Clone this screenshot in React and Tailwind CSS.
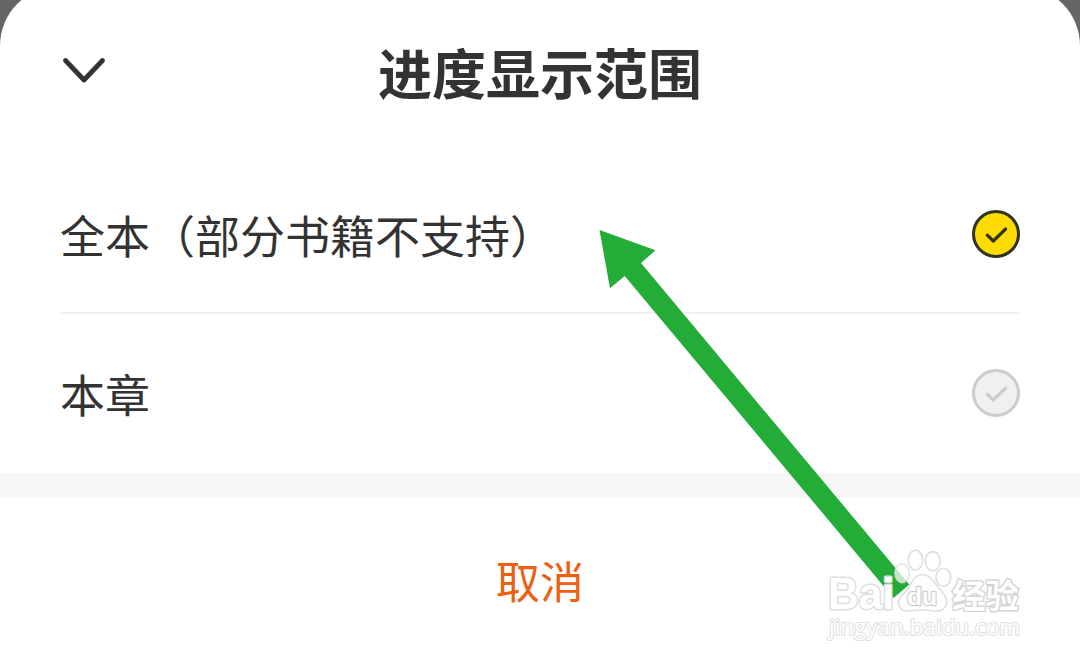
import { useState } from "react";
import clsx from "clsx";

const OPTIONS = [
  { id: "book", label: "全本（部分书籍不支持）" },
  { id: "chapter", label: "本章" },
];

const ChevronIcon = () => (
  <svg
    width="48"
    height="48"
    viewBox="0 0 48 48"
    fill="none"
    stroke="#333333"
    strokeWidth="4.8"
    strokeLinecap="round"
    strokeLinejoin="round"
  >
    <path d="M5.500 14.500 24 34l18.500-19.500" />
  </svg>
);

const CheckCircle = ({ checked }) => (
  <span
    className={clsx(
      "flex size-12 shrink-0 items-center justify-center rounded-full border-[3px]",
      checked
        ? "border-[#333322] bg-[#ffdc00] text-[#333322]"
        : "border-[#cccccc] bg-[#f0f0f0] text-[#cccccc]"
    )}
  >
    <svg
      width="42"
      height="42"
      viewBox="0 0 42 42"
      className="shrink-0"
      fill="none"
      stroke="currentColor"
      strokeWidth="3.2"
      strokeLinecap="round"
      strokeLinejoin="round"
    >
      <path d="M12.3 22.1 18.3 28 30.6 16" />
    </svg>
  </span>
);

const OptionRow = ({ label, checked, onSelect, className }) => (
  <button
    type="button"
    role="radio"
    aria-checked={checked}
    onClick={onSelect}
    className={clsx("flex w-full items-center justify-between", className)}
  >
    <span className="pt-[8px] text-[45px] leading-none">{label}</span>
    <CheckCircle checked={checked} />
  </button>
);

const Arrow = () => (
  <svg
    className="pointer-events-none absolute inset-0"
    width="1080"
    height="665"
    viewBox="0 0 1080 665"
  >
    <path
      d="M599.5 230 655.5 250.3 641 263 909.3 584.5 893.5 598 624.7 276 610 288.3Z"
      fill="#24ac38"
    />
  </svg>
);

const Watermark = () => (
  <svg
    className="pointer-events-none absolute top-[540px] left-[820px]"
    width="220"
    height="110"
    viewBox="0 0 220 110"
    fill="#ffffff"
    stroke="#dedede"
    strokeWidth="1.6"
    strokeLinejoin="round"
  >
    <g fillOpacity="0.72">
      <ellipse cx="82.2" cy="33.2" rx="7.3" ry="9.4" strokeOpacity="0.8" />
      <ellipse cx="95.5" cy="20" rx="7.2" ry="9.8" />
      <ellipse cx="112.7" cy="21.2" rx="7.5" ry="9.6" />
      <ellipse cx="123.3" cy="37.3" rx="7.4" ry="9" />
    </g>
    <path
      d="M102 34.5c6 0 9.500 3.500 12.500 8s6 7.500 9 11c3 4 4 8 2.500 12-2 4.500-6 6-11 5.500-5-.7-8-1-13-1s-9 1-14 1c-5.500 0-9-2.500-9.500-7.500s3-8 6-10.500c3.500-3 4.500-6.500 7-10.500s5.500-8 10.500-8Z"
      fillOpacity="0"
    />
    <text
      x="8"
      y="69"
      fontFamily="'Liberation Sans', sans-serif"
      fontWeight="700"
      fontSize="45"
      textLength="66"
      lengthAdjust="spacingAndGlyphs"
      strokeWidth="3"
      paintOrder="stroke"
    >
      Bai
    </text>
    <text
      x="87"
      y="65"
      fontFamily="'Liberation Sans', sans-serif"
      fontWeight="700"
      fontSize="23"
      textLength="30"
      lengthAdjust="spacingAndGlyphs"
      stroke="#cfcfcf"
      strokeWidth="2.4"
      paintOrder="stroke"
    >
      du
    </text>
    <text
      x="132"
      y="67.5"
      fontFamily="'Noto Sans CJK SC', sans-serif"
      fontWeight="700"
      fontSize="33.5"
      stroke="#d4d4d4"
      strokeWidth="2.8"
      paintOrder="stroke"
    >
      经验
    </text>
    <text
      x="9"
      y="95"
      fontFamily="'Open Sans', sans-serif"
      fontSize="22"
      textLength="191"
      lengthAdjust="spacingAndGlyphs"
      stroke="#e2e2e2"
      strokeWidth="2.2"
      paintOrder="stroke"
    >
      jingyan.baidu.com
    </text>
  </svg>
);

export default function App() {
  const [selected, setSelected] = useState("book");

  return (
    <div className="relative h-[665px] w-[1080px] overflow-hidden bg-[#666666] font-['Liberation_Sans','Noto_Sans_CJK_SC',sans-serif] text-[#333333]">
      <div className="-mt-[14px] flex h-[679px] flex-col rounded-t-[60px] bg-white">
        <header className="grid h-[170px] grid-cols-[1fr_auto_1fr] items-start px-[60px] pt-[60px]">
          <button type="button" aria-label="收起" className="size-12">
            <ChevronIcon />
          </button>
          <h1 className="pt-[2px] text-[54px] leading-[56px] font-bold">
            进度显示范围
          </h1>
        </header>

        <div role="radiogroup" className="px-[60px]">
          {OPTIONS.map((option, index) => (
            <OptionRow
              key={option.id}
              label={option.label}
              checked={selected === option.id}
              onSelect={() => setSelected(option.id)}
              className={
                index === 0
                  ? "h-[158px] border-b-2 border-[#f0f0f0]"
                  : "h-[159px] pb-px"
              }
            />
          ))}
        </div>

        <div className="h-6 bg-[#f7f7f7]" />

        <button
          type="button"
          className="flex-1 pt-[5px] text-[44px] leading-none text-[#ed5f12]"
        >
          取消
        </button>
      </div>

      <Arrow />
      <Watermark />
    </div>
  );
}
